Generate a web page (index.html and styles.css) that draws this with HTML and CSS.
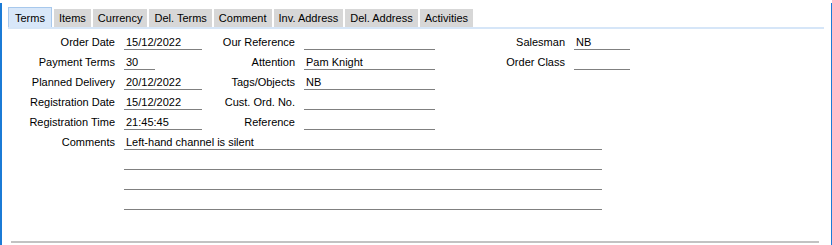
FILE: index.html
```html
<!DOCTYPE html>
<html lang="en">
<head>
  <meta charset="UTF-8" />
  <title>Sales Order - Terms</title>
  <link rel="stylesheet" href="styles.css">
</head>
<body>
  <div class="window">
    <div class="tabs">
      <div class="tab active">Terms</div>
      <div class="tab">Items</div>
      <div class="tab">Currency</div>
      <div class="tab">Del. Terms</div>
      <div class="tab">Comment</div>
      <div class="tab">Inv. Address</div>
      <div class="tab">Del. Address</div>
      <div class="tab">Activities</div>
    </div>

    <div class="form">
      <div class="label">Order Date</div>
      <div class="field w-date">15/12/2022</div>
      <div class="label">Our Reference</div>
      <div class="field w-wide"></div>
      <div class="label">Salesman</div>
      <div class="field w-short">NB</div>

      <div class="label">Payment Terms</div>
      <div class="field w-tiny">30</div>
      <div class="label">Attention</div>
      <div class="field w-wide">Pam Knight</div>
      <div class="label">Order Class</div>
      <div class="field w-short"></div>

      <div class="label">Planned Delivery</div>
      <div class="field w-date">20/12/2022</div>
      <div class="label">Tags/Objects</div>
      <div class="field w-wide">NB</div>
      <div></div>
      <div></div>

      <div class="label">Registration Date</div>
      <div class="field w-date">15/12/2022</div>
      <div class="label">Cust. Ord. No.</div>
      <div class="field w-wide"></div>
      <div></div>
      <div></div>

      <div class="label">Registration Time</div>
      <div class="field w-date">21:45:45</div>
      <div class="label">Reference</div>
      <div class="field w-wide"></div>
      <div></div>
      <div></div>

      <div class="label">Comments</div>
      <div class="comments">
        <div class="field">Left-hand channel is silent</div>
        <div class="field"></div>
        <div class="field"></div>
        <div class="field"></div>
      </div>
    </div>

    <div class="footer-line"></div>
  </div>
</body>
</html>
```

FILE: styles.css
```css
* {
  margin: 0;
  padding: 0;
  box-sizing: border-box;
}

html, body {
  height: 100%;
  background: #fff;
  font-family: "Liberation Sans", Arial, sans-serif;
  font-size: 11px;
  color: #000;
}

.window {
  margin-top: 3px;
  height: 242px;
  border-left: 2px solid #1b7bd6;
  border-right: 1px solid #1b7bd6;
  padding-top: 4px;
  display: flex;
  flex-direction: column;
}

.tabs {
  display: flex;
  align-items: flex-end;
  gap: 2px;
  margin-left: 6px;
  margin-right: 7px;
  height: 22px;
  border-bottom: 2px solid #d6e6f8;
}

.tab {
  height: 18px;
  line-height: 18px;
  padding: 0 5px;
  background: #d7d7d7;
  white-space: nowrap;
}

.tab.active {
  height: 20px;
  line-height: 20px;
  background: #d8e7f9;
  border: 1px solid #a7c8ec;
  border-bottom: none;
  padding: 0 6px;
}

.form {
  display: grid;
  grid-template-columns: 122px 78px 102px 131px 139px 56px;
  grid-auto-rows: 20px;
  margin-top: 1px;
}

.label {
  text-align: right;
  padding-right: 9px;
  line-height: 16px;
  padding-top: 4px;
  white-space: nowrap;
}

.field {
  height: 20px;
  line-height: 16px;
  padding-left: 2px;
  padding-top: 4px;
  border-bottom: 1px solid #808080;
  white-space: nowrap;
}

.w-date { width: 78px; }
.w-tiny { width: 31px; }
.w-wide { width: 131px; }
.w-short { width: 56px; }

.comments {
  grid-column: 2 / span 5;
  grid-row: span 4;
  width: 478px;
  display: flex;
  flex-direction: column;
}

.footer-line {
  margin-top: auto;
  margin-left: 9px;
  width: 808px;
  height: 2px;
  background: #c2c2c2;
  margin-bottom: 2px;
}
```
